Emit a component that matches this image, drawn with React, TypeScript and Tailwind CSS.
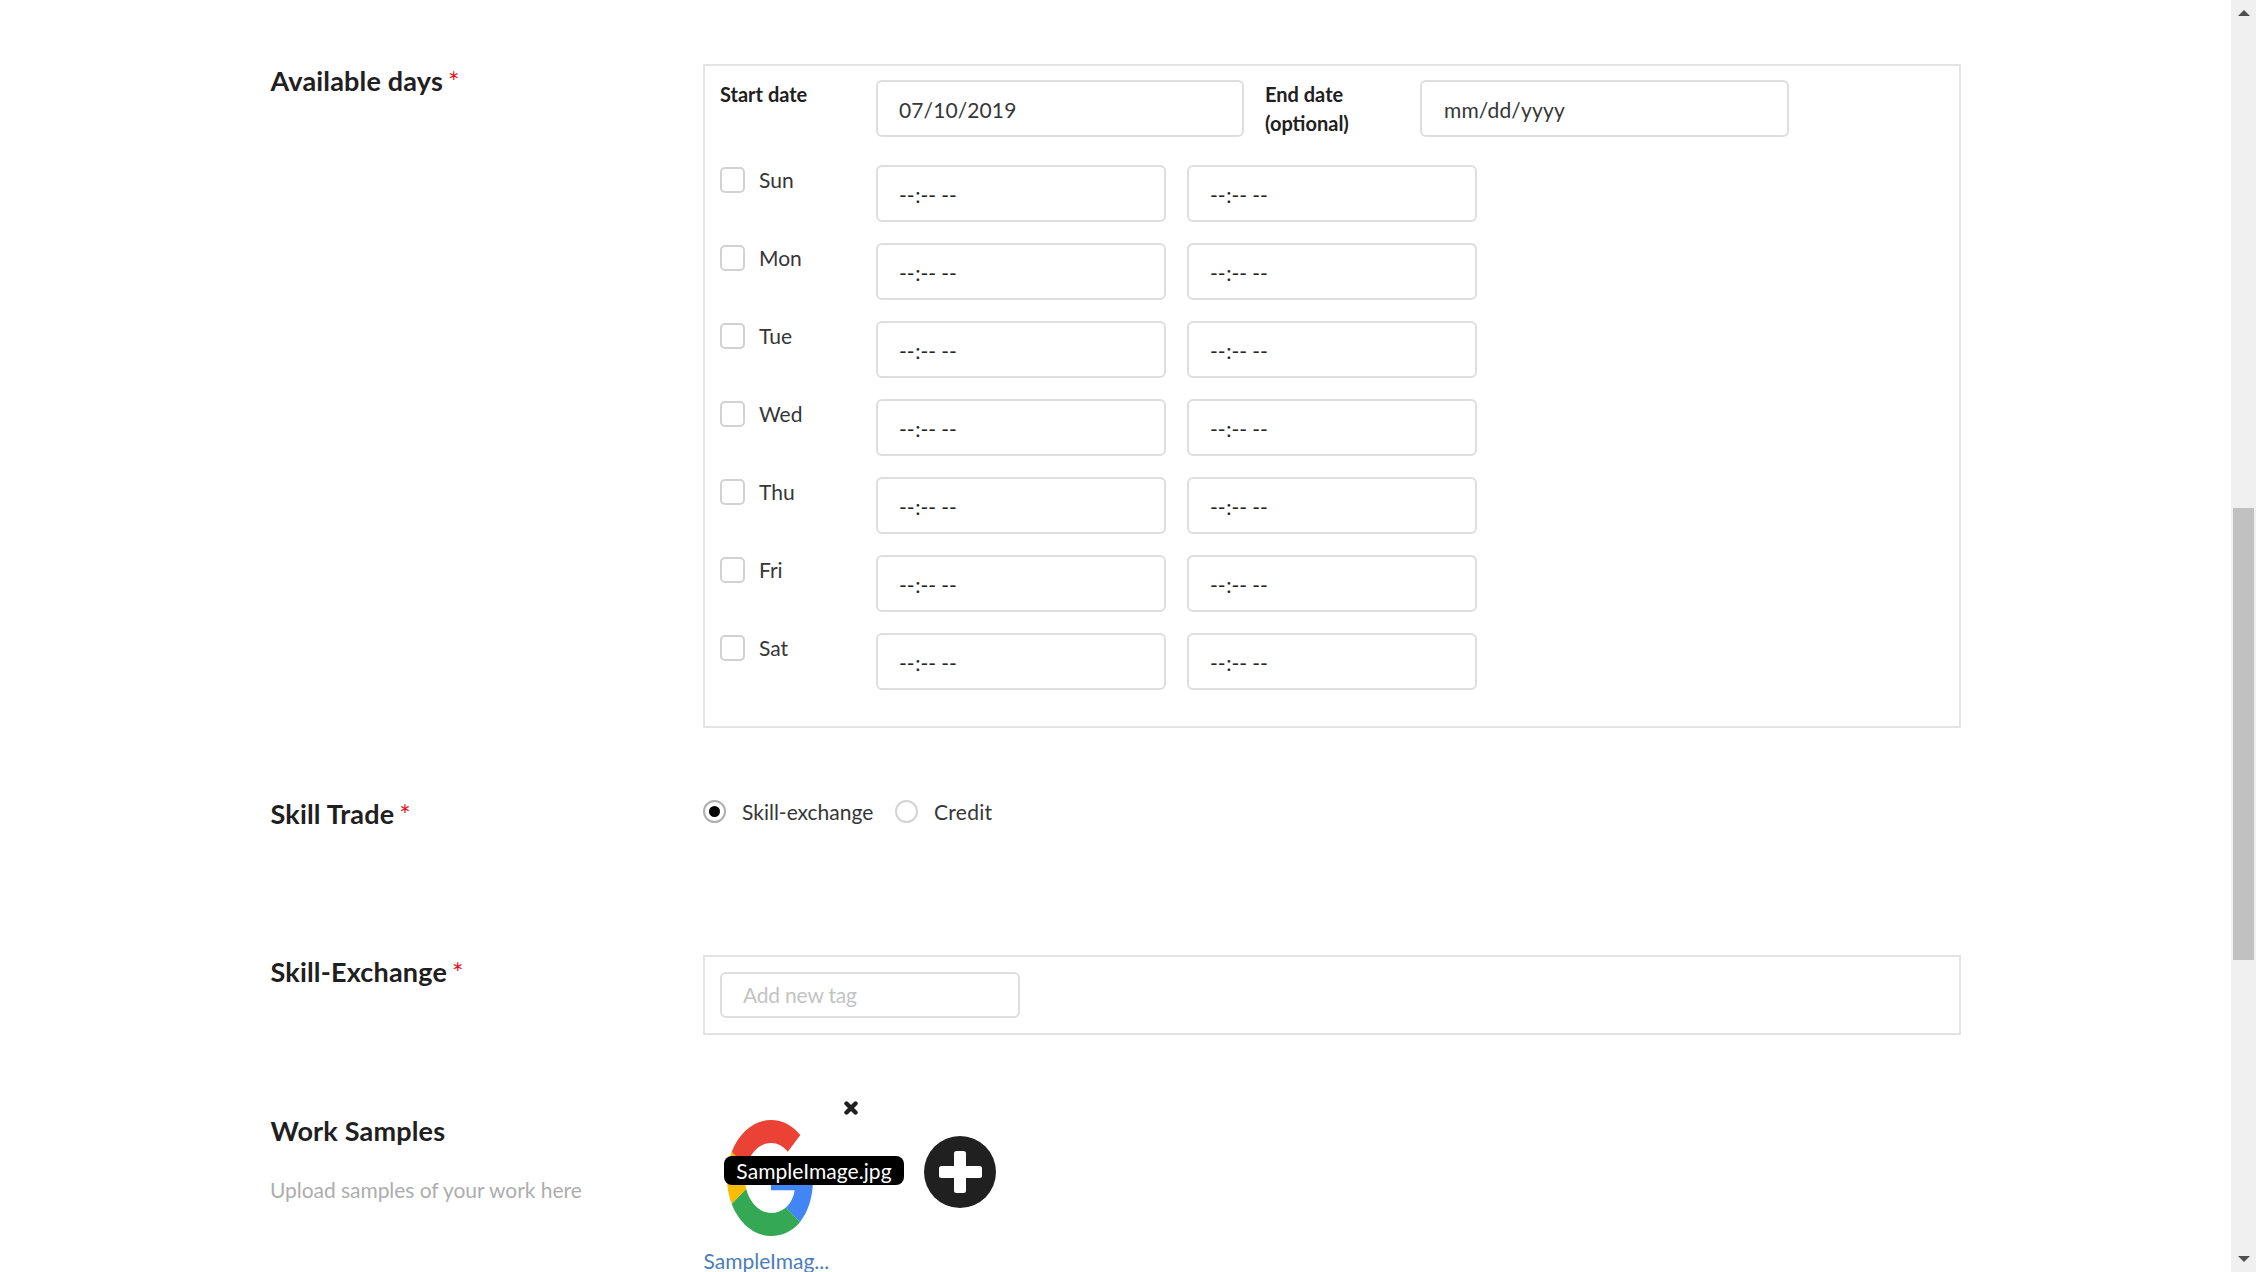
import type { ReactNode } from "react";

const days = ["Sun", "Mon", "Tue", "Wed", "Thu", "Fri", "Sat"];

function Label({ children, required }: { children: ReactNode; required?: boolean }) {
  return (
    <h3 className="pl-[0.5px] text-[27px] leading-[34px] font-bold tracking-[0.18px] text-[#1f2021]">
      {children}
      {required && <span className="relative top-px ml-[5px] inline-block font-normal text-[#e80f1a]">*</span>}
    </h3>
  );
}

function Field({ className, children }: { className: string; children: ReactNode }) {
  return (
    <div className={`flex items-center rounded-[6px] border-2 border-[#dedede] ${className}`}>
      {children}
    </div>
  );
}

function TimeField({ className }: { className?: string }) {
  return (
    <Field className={`h-[57px] w-[290px] pt-[3px] pl-[21px] text-[#252526] ${className ?? ""}`}>
      <span>--</span>
      <span className="ml-[0.7px]">:</span>
      <span>--</span>
      <span className="ml-[5px]">--</span>
    </Field>
  );
}

function DayRow({ day }: { day: string }) {
  return (
    <div className="flex h-[78px] items-start">
      <div className="mt-[2px] flex w-[156px] items-center">
        <span className="h-[26px] w-[25px] rounded-[5px] border-2 border-[#d2d2d3]" />
        <span className="ml-[14px] leading-[26px]">{day}</span>
      </div>
      <TimeField />
      <TimeField className="ml-[21px]" />
    </div>
  );
}

function GoogleLogo() {
  return (
    <svg viewBox="0 0 46.98 48" preserveAspectRatio="none" className="h-[116px] w-[86px]">
      <path fill="#EA4335" d="M24 9.5c3.54 0 6.71 1.22 9.21 3.6l6.85-6.85C35.9 2.38 30.47 0 24 0 14.62 0 6.51 5.38 2.56 13.22l7.98 6.19C12.43 13.72 17.74 9.5 24 9.5z" />
      <path fill="#4285F4" d="M46.98 24.55c0-1.57-.15-3.09-.38-4.55H24v9.02h12.94c-.58 2.96-2.26 5.48-4.78 7.18l7.73 6c4.51-4.18 7.09-10.36 7.09-17.65z" />
      <path fill="#FBBC05" d="M10.53 28.59c-.48-1.45-.76-2.99-.76-4.59s.27-3.14.76-4.59l-7.98-6.19C.92 16.46 0 20.12 0 24c0 3.88.92 7.54 2.56 10.78l7.97-6.19z" />
      <path fill="#34A853" d="M24 48c6.48 0 11.93-2.13 15.89-5.81l-7.73-6c-2.15 1.45-4.92 2.3-8.16 2.3-6.26 0-11.57-4.22-13.47-9.91l-7.98 6.19C6.51 42.62 14.62 48 24 48z" />
    </svg>
  );
}

function Scrollbar() {
  return (
    <div className="flex h-full w-[25px] flex-col items-center bg-[#f0f0f0]">
      <svg viewBox="0 0 12 6" className="mt-[10px] h-[6px] w-[12px]">
        <path d="M6 0L12 6H0z" fill="#505050" />
      </svg>
      <div className="mt-[492px] h-[452px] w-[21px] bg-[#c1c1c1]" />
      <svg viewBox="0 0 12 6" className="mt-[296px] h-[6px] w-[12px]">
        <path d="M0 0H12L6 6z" fill="#505050" />
      </svg>
    </div>
  );
}

export default function App() {
  return (
    <div className="flex h-[1272px] w-[2256px] overflow-hidden bg-white font-['Lato',sans-serif] text-[21px] text-[#363637]">
      <main className="h-full w-[2231px] overflow-hidden pt-[64px] pl-[270px]">
        <section className="flex h-[736px]">
          <div className="w-[433px]">
            <Label required>Available days</Label>
          </div>
          <div className="h-[664px] w-[1258px] border-2 border-[#e3e3e4] pt-[14px] pl-[15px]">
            <div className="flex h-[85px] items-start">
              <div className="w-[156px] text-[20px] leading-[29px] font-bold text-[#1f2021]">Start date</div>
              <Field className="h-[57px] w-[368px] pt-[2px] pl-[21px] tracking-[0.1px]">07/10/2019</Field>
              <div className="ml-[21px] w-[155px] text-[20px] leading-[29px] font-bold text-[#1f2021]">
                End date
                <br />
                (optional)
              </div>
              <Field className="h-[57px] w-[369px] pt-[2px] pl-[22px] tracking-[0.15px]">mm/dd/yyyy</Field>
            </div>
            {days.map((day) => (
              <DayRow key={day} day={day} />
            ))}
          </div>
        </section>

        <section className="flex h-[155px]">
          <div className="-mt-[3px] w-[433px]">
            <Label required>Skill Trade</Label>
          </div>
          <div className="flex h-[23px] items-center">
            <span className="flex size-[23px] items-center justify-center rounded-full border-2 border-[#b0b0b0]">
              <span className="size-[11px] rounded-full bg-black" />
            </span>
            <span className="ml-[16px] w-[153px] whitespace-nowrap">Skill-exchange</span>
            <span className="size-[23px] rounded-full border-2 border-[#d4d4d5]" />
            <span className="ml-[16px] tracking-[0.3px]">Credit</span>
          </div>
        </section>

        <section className="flex h-[145px]">
          <div className="w-[433px]">
            <Label required>Skill-Exchange</Label>
          </div>
          <div className="h-[80px] w-[1258px] border-2 border-[#e3e3e4] pt-[15px] pl-[15px]">
            <Field className="h-[46px] w-[300px] pl-[21px] tracking-[-0.2px] text-[#c3c3c4]">Add new tag</Field>
          </div>
        </section>

        <section className="flex">
          <div className="w-[433px] pt-[14px]">
            <Label>Work Samples</Label>
            <p className="mt-[27px] leading-[30px] tracking-[-0.05px] text-[#adadae]">Upload samples of your work here</p>
          </div>
          <div className="w-[221px] pt-px">
            <svg viewBox="0 0 14 14" className="ml-[141px] size-[14px]">
              <path d="M2.5 2.5L11.5 11.5M11.5 2.5L2.5 11.5" stroke="#1f2021" strokeWidth="4.4" strokeLinecap="round" />
            </svg>
            <div className="relative mt-[5px] ml-[24px] h-[116px] w-[86px]">
              <GoogleLogo />
              <div className="absolute top-[36px] left-[-3px] flex h-[29px] w-[180px] items-center justify-center rounded-[8px] bg-black tracking-[0.06px] whitespace-nowrap text-white">
                SampleImage.jpg
              </div>
            </div>
            <a className="mt-[10px] block pl-[0.5px] leading-[30px] text-[#4b7eb8]">SampleImag...</a>
          </div>
          <svg viewBox="0 0 72 72" className="mt-[36px] size-[72px]">
            <circle cx="36" cy="36" r="36" fill="#202021" />
            <rect x="30" y="15" width="12" height="42" rx="2.5" fill="#fff" />
            <rect x="15" y="30" width="43" height="12" rx="2.5" fill="#fff" />
          </svg>
        </section>
      </main>
      <Scrollbar />
    </div>
  );
}
